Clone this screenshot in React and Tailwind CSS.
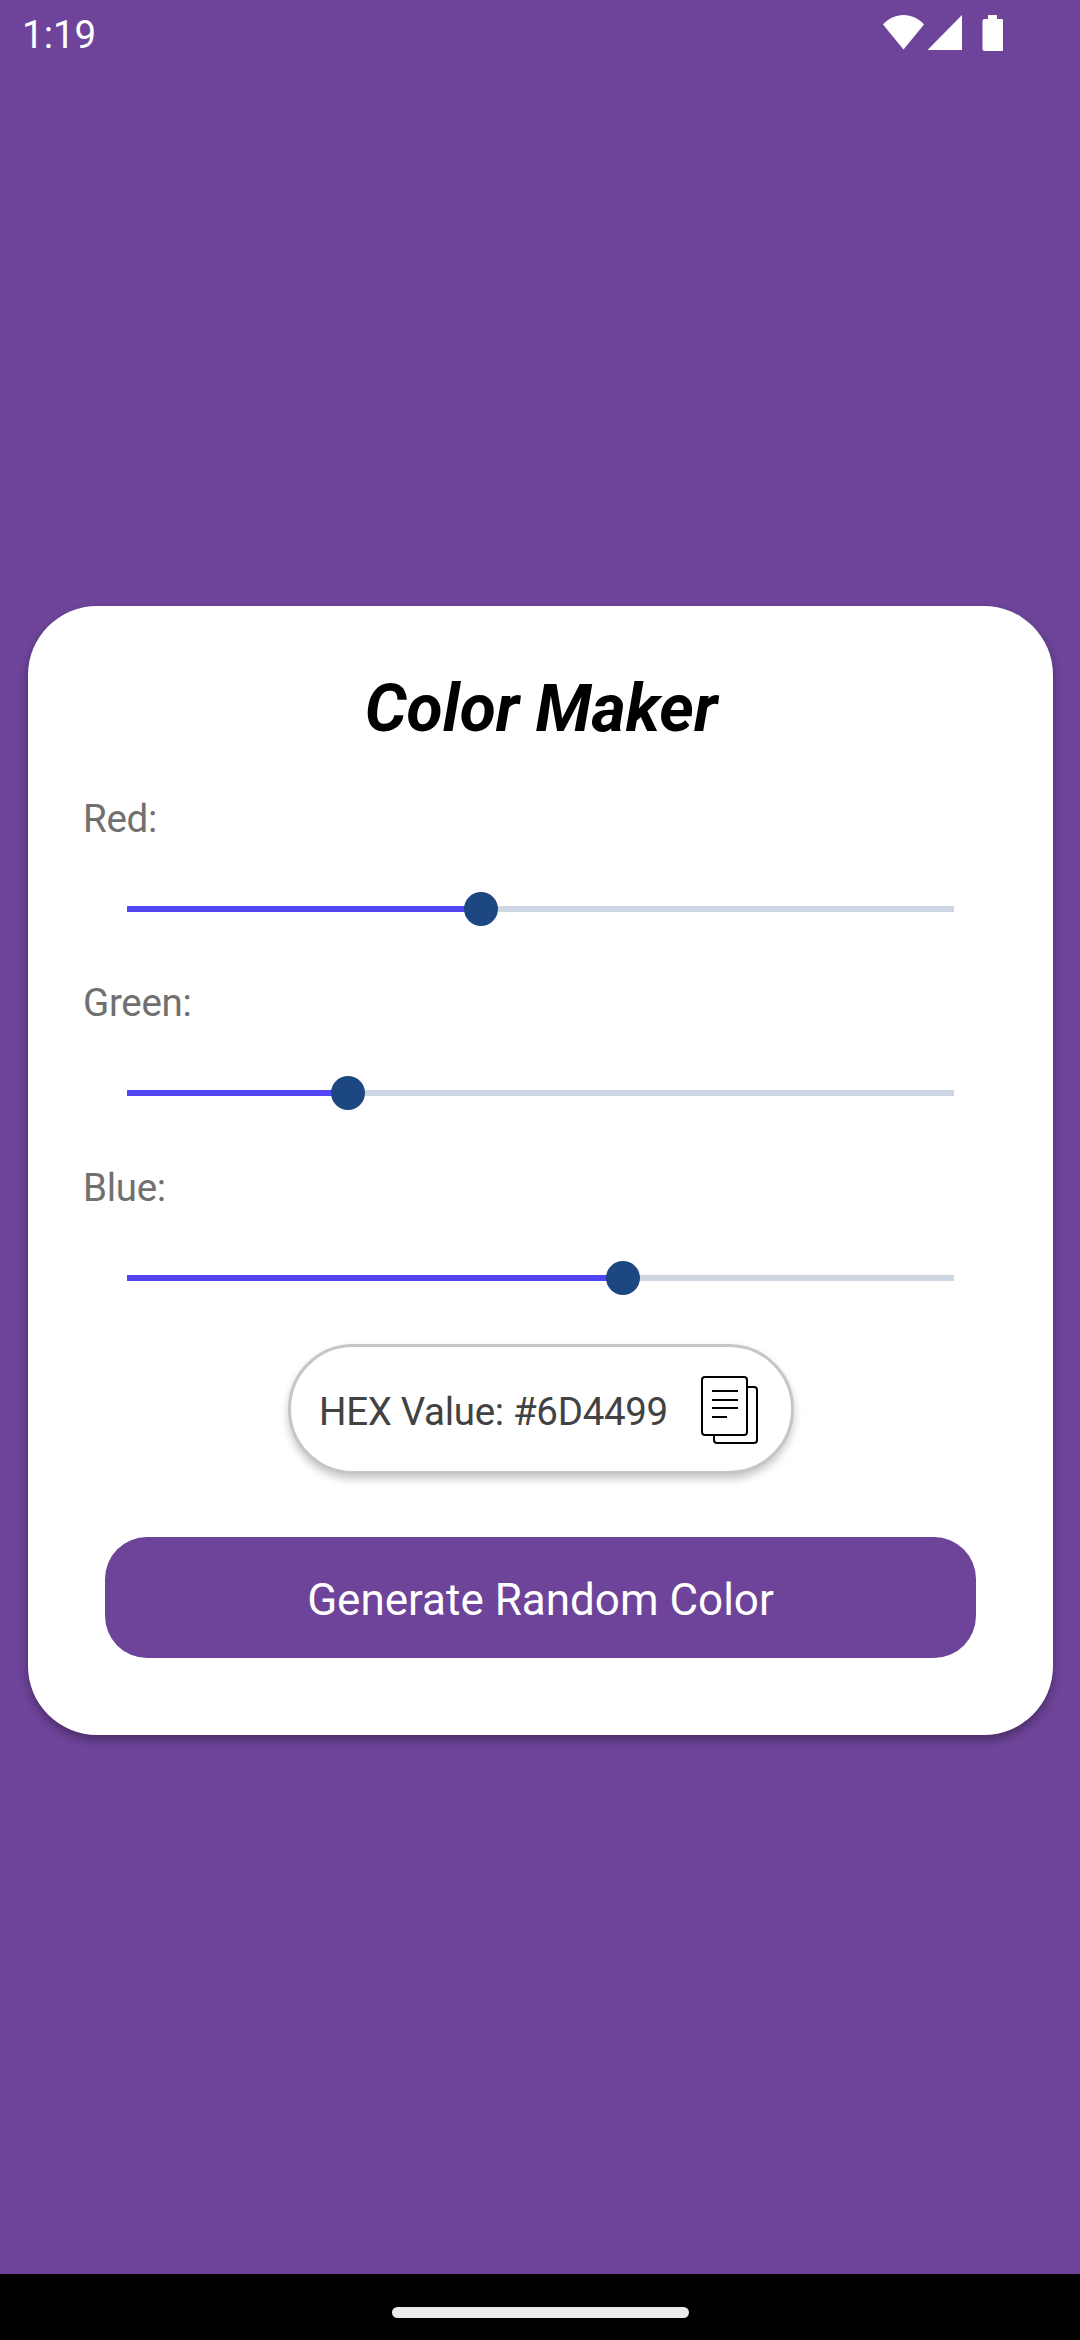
const channels = [
  { label: 'Red:', value: 109, gap: 'mt-[45px]' },
  { label: 'Green:', value: 68, gap: 'mt-[51px]' },
  { label: 'Blue:', value: 153, gap: 'mt-[52px]' },
];

function StatusBar() {
  return (
    <header className="flex h-[66px] w-full shrink-0 items-start justify-between pl-[22px] pr-[77px] text-white">
      <span className="mt-[9px] text-[38.5px] leading-[52px]">1:19</span>
      <svg className="mt-[15px] h-9 w-[120px]" viewBox="0 0 120 36" fill="currentColor">
        <path d="M0 9.5C5.500 3.500 12.500 0 20.500 0S35.500 3.500 41 9.500L20.500 34.500Z" />
        <path d="M44.500 35L79 0V35Z" />
        <path d="M105 0h9v4h4.500a2 2 0 0 1 2 2v28a2 2 0 0 1-2 2h-17a2 2 0 0 1-2-2V6a2 2 0 0 1 2-2H105Z" />
      </svg>
    </header>
  );
}

function ChannelSlider({ label, value, gap }) {
  const percent = (value / 255) * 100;
  return (
    <div className={gap}>
      <div className="ml-[55px] text-[38.5px] leading-[52px] tracking-[-0.3px] text-[#707070]">{label}</div>
      <div className="relative ml-[99px] mt-[47px] flex h-[34px] w-[827px] items-center">
        <div className="h-1.5 w-full bg-[#ced5e3]">
          <div className="h-full bg-[#5145f5]" style={{ width: `${percent}%` }} />
        </div>
        <div
          className="absolute top-0 size-[34px] -translate-x-1/2 rounded-full bg-[#1c4780]"
          style={{ left: `${percent}%` }}
        />
      </div>
    </div>
  );
}

function CopyIcon() {
  return (
    <svg className="h-[68px] w-[57px]" viewBox="0 0 57 68" fill="none" stroke="#000" strokeWidth="2">
      <rect x="1" y="1" width="45" height="58" rx="3" />
      <path d="M46 11h7a3 3 0 0 1 3 3v50a3 3 0 0 1-3 3H16a3 3 0 0 1-3-3v-5" />
      <path d="M11 15h26M11 24h26M11 32h26M11 41h15" />
    </svg>
  );
}

export default function App() {
  return (
    <div className="flex h-[2340px] w-[1080px] flex-col overflow-hidden bg-[#6d4499] font-[Roboto,sans-serif]">
      <StatusBar />
      <main className="grow">
        <section className="ml-7 mt-[540px] flex h-[1129px] w-[1025px] flex-col rounded-[69px] bg-white pt-16 shadow-[0_5px_10px_rgba(0,0,0,0.32)]">
          <h1 className="pl-px text-center text-[66px] font-bold italic leading-[78px] text-black">
            Color Maker
          </h1>
          {channels.map((c) => (
            <ChannelSlider key={c.label} {...c} />
          ))}
          <div className="ml-[260px] mt-[49px] flex h-[130px] w-[506px] shrink-0 items-start rounded-[65px] border-[3px] border-[#c6c6c6] bg-white pl-7 shadow-[0_5px_8px_rgba(0,0,0,0.22)]">
            <span className="mt-[39px] w-[382px] whitespace-nowrap text-[38.5px] leading-[52px] tracking-[-0.32px] text-[#424242]">
              HEX Value: #6D4499
            </span>
            <button className="mt-[29px]" aria-label="Copy">
              <CopyIcon />
            </button>
          </div>
          <button className="ml-[77px] mt-[63px] h-[121px] w-[871px] shrink-0 rounded-[42px] bg-[#6d4499] pt-[5px] text-[44px] leading-[52px] text-white">
            Generate Random Color
          </button>
        </section>
      </main>
      <footer className="flex h-[66px] shrink-0 justify-center bg-black pt-[33px]">
        <div className="h-[11px] w-[297px] rounded-full bg-[#ebebeb]" />
      </footer>
    </div>
  );
}
